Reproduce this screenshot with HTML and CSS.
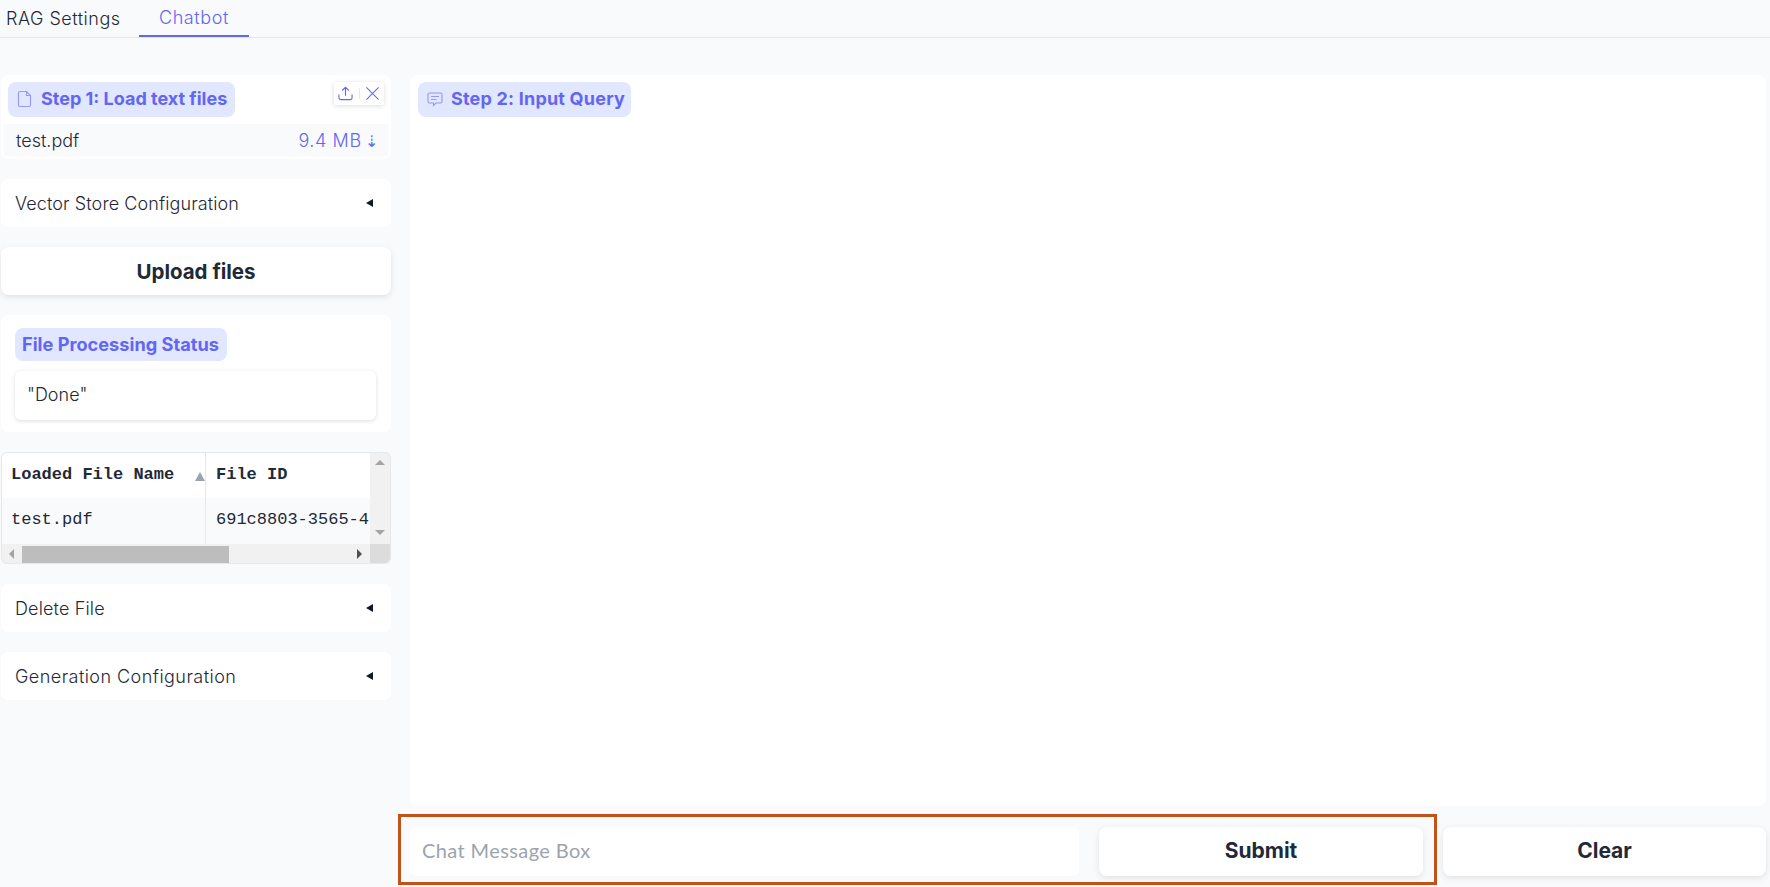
FILE: index.html
```html
<!DOCTYPE html>
<html lang="en">
<head>
<meta charset="utf-8">
<title>RAG Chatbot</title>
<link rel="stylesheet" href="styles.css">
</head>
<body>
<nav class="tabs">
  <button class="tab tab-first">RAG Settings</button>
  <button class="tab tab-active">Chatbot</button>
</nav>
<main class="layout">
  <aside class="sidebar">
    <section class="panel upload-panel">
      <div class="upload-head">
        <div class="pill pill-step">
          <svg class="pill-icon" viewBox="0 0 16 18" fill="none" stroke="currentColor" stroke-width="1.100"><path d="M3 1.500h6.500L13.500 5.500V15a1.500 1.500 0 0 1-1.500 1.500H3A1.500 1.500 0 0 1 1.500 15V3A1.500 1.500 0 0 1 3 1.500Z"/><path d="M9.500 1.500v4h4"/></svg>
          <span class="pill-text">Step 1: Load text files</span>
        </div>
        <div class="toolbar">
          <svg class="tool" viewBox="0 0 16 16" fill="none" stroke="currentColor" stroke-width="1.200"><path d="M8 10.500V1.500M4.500 4.800 8 1.300l3.500 3.500M1 9v3.500a2 2 0 0 0 2 2h10a2 2 0 0 0 2-2V9"/></svg>
          <span class="tool-sep"></span>
          <svg class="tool" viewBox="0 0 16 16" fill="none" stroke="currentColor" stroke-width="1.100"><path d="M1.500 1.500l13 13M14.500 1.500l-13 13"/></svg>
        </div>
      </div>
      <div class="file-row">
        <span class="file-name">test.pdf</span>
        <span class="file-size">9.4 MB <span class="file-arrow">⇣</span></span>
      </div>
    </section>

    <section class="panel accordion"><span class="acc-label acc-vector">Vector Store Configuration</span><span class="caret"></span></section>

    <button class="btn btn-upload">Upload files</button>

    <section class="panel status-panel">
      <div class="pill pill-status">File Processing Status</div>
      <div class="status-box">"Done"</div>
    </section>

    <section class="grid-wrap">
      <div class="grid-body">
        <div class="grid-clip">
          <div class="cell head col-a">Loaded File Name<span class="sort"></span></div>
          <div class="cell head col-b">File ID</div>
          <div class="cell row col-a">test.pdf</div>
          <div class="cell row col-b">691c8803-3565-4</div>
        </div>
        <div class="vbar"><span class="arrow-up"></span><span class="arrow-down"></span></div>
      </div>
      <div class="hbar">
        <span class="arrow-left"></span>
        <span class="thumb"></span>
        <span class="arrow-right"></span>
        <span class="corner"></span>
      </div>
    </section>

    <section class="panel accordion"><span class="acc-label acc-delete">Delete File</span><span class="caret"></span></section>
    <section class="panel accordion"><span class="acc-label acc-gen">Generation Configuration</span><span class="caret"></span></section>
  </aside>

  <div class="content">
    <section class="chat-panel">
      <div class="pill pill-query">
        <svg class="pill-icon" viewBox="0 0 16 16" fill="none" stroke="currentColor" stroke-width="1.100"><path d="M2.500 2h11A1.500 1.500 0 0 1 15 3.500v7a1.500 1.500 0 0 1-1.500 1.500H9l-2.500 2.500V12h-4A1.500 1.500 0 0 1 1 10.500v-7A1.500 1.500 0 0 1 2.500 2Z"/><path d="M4 5.500h8M4 8.500h5.500"/></svg>
        <span class="pill-text">Step 2: Input Query</span>
      </div>
    </section>
    <div class="input-row">
      <div class="chat-input">Chat Message Box</div>
      <button class="btn btn-submit">Submit</button>
      <button class="btn btn-clear">Clear</button>
      <div class="highlight"></div>
    </div>
  </div>
</main>
</body>
</html>
```

FILE: styles.css
```css
* { box-sizing: border-box; }
html, body { margin: 0; height: 100%; }
body {
  width: 1770px;
  height: 887px;
  overflow: hidden;
  background: #f9fafb;
  color: #1f2937;
  font-family: "Inter", "Liberation Sans", sans-serif;
}
.tabs {
  display: flex;
  height: 38px;
  border-bottom: 1px solid #e5e7eb;
}
.tab {
  background: none;
  border: 0;
  padding: 0;
  font: inherit;
  font-size: 18px;
  font-weight: 300;
  color: #1f2937;
  height: 37px;
}
.tab-first { width: 139px; text-align: left; padding-left: 6px; letter-spacing: 0.5px; }
.tab-active {
  width: 110px;
  color: #6366f1;
  border-bottom: 2px solid #6366f1;
  letter-spacing: 0.6px;
}
.layout {
  display: flex;
  padding: 37px 5px 0 1px;
  gap: 19px;
}
.sidebar {
  width: 390px;
  flex: none;
  display: flex;
  flex-direction: column;
  gap: 20px;
}
.panel {
  background: #fff;
  border-radius: 7px;
}
.upload-panel { height: 84px; padding: 7px 3px 3px; }
.upload-head {
  display: flex;
  justify-content: space-between;
  align-items: flex-start;
  padding: 0 4px;
  height: 42px;
}
.pill {
  display: inline-flex;
  align-items: center;
  background: #e0e7ff;
  color: #6366f1;
  border-radius: 8px;
  font-weight: 700;
  height: 34.5px;
  padding-bottom: 1px;
}
.pill-step { width: 227px; padding-left: 9px; gap: 8px; font-size: 18px; }
.pill-step .pill-icon { width: 16px; height: 18px; }
.pill-icon { width: 16px; height: 16px; flex: none; opacity: 0.6; }
.toolbar {
  display: flex;
  align-items: center;
  justify-content: space-between;
  width: 50px;
  height: 23px;
  background: #fff;
  color: #6366f1;
  box-shadow: 0 1px 5px rgba(0, 0, 0, 0.14);
  border-radius: 2px;
  padding: 0 4px;
}
.tool { width: 15px; height: 15px; }
.tool-sep { width: 1px; height: 11px; background: #e5e7eb; }
.file-row {
  display: flex;
  justify-content: space-between;
  align-items: center;
  height: 32px;
  background: #f9fafb;
  padding: 0 9px 0 12px;
  font-weight: 300;
  font-size: 18px;
}
.file-size { color: #6366f1; font-size: 18px; letter-spacing: 0.6px; }
.file-arrow { font-size: 16px; margin-left: -2px; }
.accordion {
  display: flex;
  justify-content: space-between;
  align-items: center;
  height: 48px;
  padding: 0 18px 0 14px;
}
.acc-label { font-size: 18px; font-weight: 300; }
.acc-vector { letter-spacing: 0.1px; }
.acc-delete { letter-spacing: 0.15px; }
.acc-gen { letter-spacing: 0.45px; }
.caret {
  width: 0; height: 0;
  border-style: solid;
  border-width: 4px 7px 4px 0;
  border-color: transparent #111827 transparent transparent;
}
.btn {
  border: 0;
  background: #fff;
  font: inherit;
  font-weight: 700;
  font-size: 20.5px;
  color: #1f2937;
  height: 48px;
  border-radius: 8px;
  box-shadow: 0 2px 6px rgba(0, 0, 0, 0.1);
}
.btn-upload { width: 390px; flex: none; padding-bottom: 1px; }
.status-panel { height: 116.5px; padding: 13px 14px 0; }
.pill-status { padding: 0 7px 1px; width: 212px; height: 33px; font-size: 18.2px; }
.status-box {
  margin-top: 10px;
  height: 49px;
  width: 361px;
  background: #fff;
  border-radius: 6px;
  box-shadow: 0 1px 4px rgba(0, 0, 0, 0.14);
  padding: 0 12px 2px;
  display: flex;
  align-items: center;
  font-size: 18px;
  font-weight: 300;
}
.grid-wrap {
  height: 112.5px;
  border-radius: 6px;
  overflow: hidden;
  background: #f0f0f0;
  border: 1px solid #e5e7eb;
  font-family: "Liberation Mono", monospace;
  font-size: 17px;
}
.grid-body { display: flex; height: 91px; }
.grid-clip {
  width: 368px;
  overflow: hidden;
  display: grid;
  grid-template-columns: 204px 204px;
  grid-template-rows: 45px 46px;
}
.cell {
  white-space: nowrap;
  display: flex;
  align-items: center;
  padding: 0 0 2px 9px;
  position: relative;
}
.head { background: #fff; font-weight: 700; color: #1f2937; }
.row { background: #f9fafb; color: #1f2937; }
.col-a { border-right: 1px solid #e5e7eb; }
.col-b { padding-left: 10px; }
.sort {
  position: absolute;
  right: 0;
  top: 19px;
  width: 0; height: 0;
  border-style: solid;
  border-width: 0 5px 9px 5px;
  border-color: transparent transparent #9ca3af transparent;
}
.vbar {
  flex: 1;
  background: #f1f1f1;
  position: relative;
}
.arrow-up, .arrow-down, .arrow-left, .arrow-right {
  position: absolute;
  width: 0; height: 0;
  border-style: solid;
}
.arrow-up { top: 7px; left: 5px; border-width: 0 5px 5px 5px; border-color: transparent transparent #a3a3a3 transparent; }
.arrow-down { bottom: 9px; left: 5px; border-width: 5px 5px 0 5px; border-color: #a3a3a3 transparent transparent transparent; }
.hbar {
  position: relative;
  height: 21px;
  background: #f1f1f1;
}
.arrow-left { top: 5px; left: 7px; border-width: 5px 5px 5px 0; border-color: transparent #a3a3a3 transparent transparent; }
.arrow-right { top: 5px; left: 355px; border-width: 5px 0 5px 5px; border-color: transparent transparent transparent #505050; }
.thumb {
  position: absolute;
  left: 20px;
  top: 2px;
  width: 207px;
  height: 17px;
  background: #bdbdbd;
}
.corner {
  position: absolute;
  right: 0;
  top: 0;
  width: 20px;
  height: 100%;
  background: #dcdcdc;
}
.content {
  flex: 1;
  display: flex;
  flex-direction: column;
  gap: 21px;
}
.chat-panel {
  height: 731px;
  background: #fff;
  border-radius: 7px;
  padding: 7px 8px;
}
.pill-query { width: 213px; padding-left: 9px; gap: 8px; font-size: 18px; letter-spacing: 0.2px; }
.input-row {
  position: relative;
  display: flex;
  gap: 20px;
  height: 49px;
}
.chat-input {
  width: 669px;
  background: #fff;
  border-radius: 6px;
  padding: 0 12px 4px;
  display: flex;
  align-items: center;
  color: #9ca3af;
  font-family: "Lato", sans-serif;
  font-size: 20px;
  font-weight: 400;
  letter-spacing: 0.4px;
}
.input-row .btn { height: 49px; font-size: 21px; padding-bottom: 3px; }
.btn-submit { width: 324px; }
.btn-clear { width: 323px; }
.highlight {
  position: absolute;
  left: -12px;
  top: -13px;
  width: 1039px;
  height: 71px;
  border: 3px solid #c2511a;
  pointer-events: none;
}
```
